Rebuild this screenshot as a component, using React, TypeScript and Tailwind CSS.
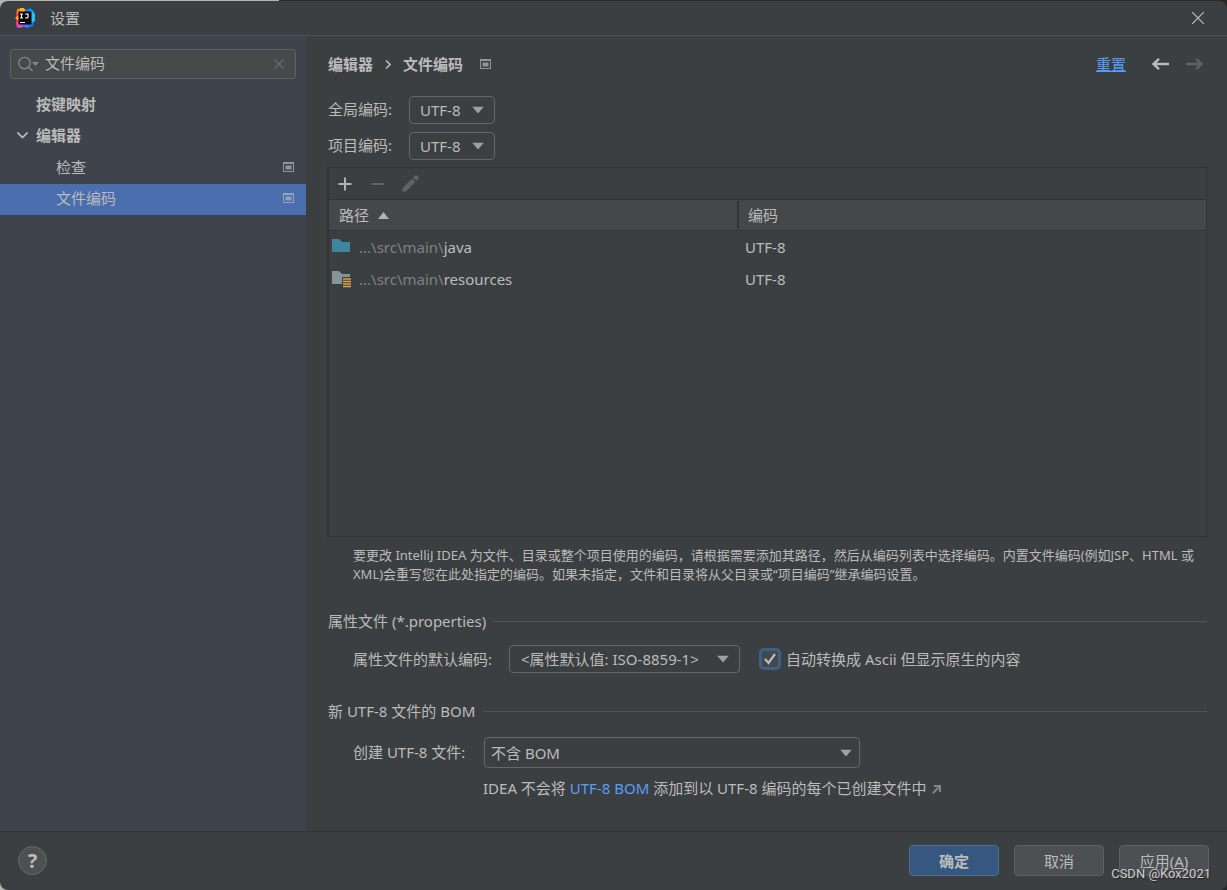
import { ReactNode, useState } from "react"
import clsx from "clsx"

const rows = [
    { prefix: "...\\src\\main\\", name: "java", encoding: "UTF-8", icon: "source" },
    { prefix: "...\\src\\main\\", name: "resources", encoding: "UTF-8", icon: "resource" },
]

const Logo = () => (
    <svg width="20" height="20" viewBox="0 0 20 20" aria-hidden="true">
        <path d="M2 1 7 0l4 2 1 8-9 2-2-4Z" fill="#fc801d" />
        <path d="M5 0h4l2 4-6 1Z" fill="#fdb60d" />
        <path d="M1 6l6-1 3 9-3 5-5 1-1-5Z" fill="#fe2857" />
        <path d="M0 10l4-3v6Z" fill="#fdb60d" />
        <path d="M1 15l6-3 2 7-6 1Z" fill="#e04ac8" />
        <path d="M10 2l5-2 4 3 1 6-2 9-6 2-5-2Z" fill="#087cfa" />
        <path d="M15 1l5 5v7l-4 2Z" fill="#21c3f7" />
        <path d="M8 17h6l-2 3Z" fill="#7b61ff" />
        <rect x="3.500" y="3.500" width="13" height="13" fill="#0b0608" />
        <path d="M5 6h3M6.500 6v4M5 10h3M10 6h3v3q0 1-1 1h-2M5 14.500h5" stroke="#fff" strokeWidth="1.200" fill="none" />
    </svg>
)

const ProjectIcon = ({ className }: { className?: string }) => (
    <svg width="11" height="10" viewBox="0 0 11 10" className={className} aria-hidden="true">
        <path d="M0 0h11v10H0ZM1 2v7h9V2Z" fill="currentColor" fillRule="evenodd" />
        <rect x="2.500" y="3.500" width="6" height="4" fill="currentColor" />
    </svg>
)

const FolderIcon = ({ type }: { type: string }) => (
    <svg width="20" height="18" viewBox="0 0 20 18" aria-hidden="true">
        <path d="M0 1h7l3 3h8v10H0Z" fill={type === "source" ? "#3e86a0" : "#87939a"} />
        {type === "resource" && (
            <>
                <rect x="10" y="7" width="10" height="11" fill="#3c3f41" />
                <path d="M11 9h8M11 11.500h8M11 14h8M11 16.500h8" stroke="#d9a343" strokeWidth="1.400" />
            </>
        )}
    </svg>
)

type SelectProps = {
    id: string
    options: string[]
    className: string
    arrow: string
}

const Select = ({ id, options, className, arrow }: SelectProps) => (
    <div className="relative">
        <select
            id={id}
            className={clsx("block appearance-none rounded border border-[#646669] bg-[#3c3f41] focus:outline-none", className)}>
            {options.map(option => (
                <option key={option}>{option}</option>
            ))}
        </select>
        <svg
            width="12"
            height="7"
            viewBox="0 0 12 7"
            className={clsx("pointer-events-none absolute top-1/2 -translate-y-1/2 text-[#9da0a2]", arrow)}>
            <path d="M0 0h12L6 7Z" fill="currentColor" />
        </svg>
    </div>
)

const SectionTitle = ({ children }: { children: ReactNode }) => (
    <div className="flex h-6 items-center gap-2 pl-px">
        <h2>{children}</h2>
        <span className="h-px flex-1 bg-[#515456]" />
    </div>
)

const Sidebar = () => {

    const [query, setQuery] = useState("文件编码")

    return (
        <aside className="w-[306px] shrink-0 bg-[#3f434c]">
            <div className="mx-[10px] mt-[13px] mb-[11px] flex h-[30px] items-center rounded-[3px] border border-[#5f6365] bg-[#45494a] px-[7px]">
                <svg width="21" height="16" viewBox="0 0 21 16" fill="none" className="text-[#82898d]" aria-hidden="true">
                    <circle cx="6.500" cy="7" r="5.700" stroke="currentColor" strokeWidth="1.300" />
                    <path d="m10.500 11 4 4" stroke="currentColor" strokeWidth="1.600" />
                    <path d="M14 6h7l-3.500 4Z" fill="currentColor" />
                </svg>
                <input
                    type="text"
                    aria-label="搜索"
                    value={query}
                    onChange={e => setQuery(e.target.value)}
                    className="mb-0.5 ml-1.5 min-w-0 flex-1 bg-transparent focus:outline-none" />
                <button type="button" aria-label="清除" onClick={() => setQuery("")} className="p-1 text-[#6b7073]">
                    <svg width="10" height="10" viewBox="0 0 10 10" stroke="currentColor" strokeWidth="1.100">
                        <path d="m0 0 10 10M10 0 0 10" />
                    </svg>
                </button>
            </div>

            <nav>
                <a href="#keymap" className="flex h-[31px] items-center pb-1 pl-9 font-bold">按键映射</a>
                <a href="#editor" className="flex h-8 items-center gap-2 pb-1 pl-[17px] font-bold">
                    <svg width="11" height="7" viewBox="0 0 11 7" fill="none" stroke="currentColor" strokeWidth="1.600">
                        <path d="m.5.5 5 5 5-5" />
                    </svg>
                    编辑器
                </a>
                <a href="#inspections" className="flex h-[31px] items-center justify-between pr-3 pb-1 pl-14">
                    检查
                    <ProjectIcon className="text-[#8c969d]" />
                </a>
                <a href="#encodings" className="flex h-[31px] items-center justify-between bg-[#4b6eaf] pr-3 pb-1 pl-14">
                    文件编码
                    <ProjectIcon className="text-[#93a3bd]" />
                </a>
            </nav>
        </aside>
    )
}

const EncodingTable = () => (
    <div className="mt-[7px] flex min-h-[340px] flex-1 flex-col border border-l-2 border-[#323232]">
        <div className="flex h-[31px] shrink-0 items-center pl-[9px]">
            <button type="button" aria-label="添加">
                <svg width="14" height="14" viewBox="0 0 14 14" stroke="#afb1b3" strokeWidth="2">
                    <path d="M7 .5v13M.5 7h13" />
                </svg>
            </button>
            <button type="button" aria-label="移除" className="ml-5">
                <svg width="12" height="14" viewBox="0 0 12 14" stroke="#5f6163" strokeWidth="2">
                    <path d="M0 7h12" />
                </svg>
            </button>
            <button type="button" aria-label="编辑" className="ml-[18px]">
                <svg width="17" height="17" viewBox="0 0 17 17" fill="#5f6163">
                    <path d="M10 3.500 13.500 7 4 16.500H.5V13ZM11 2.500 13 .5q1-.8 2 0l1.500 1.500q.8 1 0 2l-2 2Z" />
                </svg>
            </button>
        </div>
        <table className="w-full table-fixed border-collapse text-left">
            <thead>
                <tr className="h-[31px] border-y border-[#323537] bg-[#45484a]">
                    <th className="w-[408px] py-0 pr-0 pl-2.5 font-normal">
                        <span className="flex items-center gap-[9px]">
                            路径
                            <svg width="11" height="7" viewBox="0 0 11 7" fill="#afb1b3">
                                <path d="M0 7h11L5.500 0Z" />
                            </svg>
                        </span>
                    </th>
                    <th className="p-0 font-normal">
                        <span className="block h-7 border-l-2 border-[#323537] pl-[9px] leading-7">编码</span>
                    </th>
                </tr>
            </thead>
            <tbody>
                {rows.map(row => (
                    <tr key={row.name} className="h-8">
                        <td className="py-0 pr-0 pl-[3px]">
                            <span className="flex items-center gap-[7px]">
                                <FolderIcon type={row.icon} />
                                <span><span className="text-[#7f8183]">{row.prefix}</span>{row.name}</span>
                            </span>
                        </td>
                        <td className="py-0 pr-0 pl-2">{row.encoding}</td>
                    </tr>
                ))}
            </tbody>
        </table>
    </div>
)

const App = () => {

    const [autoConvert, setAutoConvert] = useState(true)

    return (
        <div className="flex min-h-screen flex-col bg-[linear-gradient(to_right,#b4b4b4_279px,#292929_279px)] pt-px font-['Noto_Sans','Noto_Sans_CJK_SC',sans-serif] text-[15px] leading-5 text-[#bbbbbb]">
            <div className="relative flex flex-1 flex-col overflow-hidden rounded-lg bg-[#3c3f41]">

                {/* Title bar */}
                <header className="flex h-[35px] items-center border-b border-[#515456] pr-[23px] pl-[15px]">
                    <Logo />
                    <h1 className="ml-[15px] flex-1">设置</h1>
                    <button type="button" aria-label="关闭">
                        <svg width="12" height="12" viewBox="0 0 12 12" stroke="#bbbbbb" strokeWidth="1.200">
                            <path d="m0 0 12 12M12 0 0 12" />
                        </svg>
                    </button>
                </header>

                <div className="flex flex-1">
                    <Sidebar />

                    <main className="flex min-w-0 flex-1 flex-col pr-5 pb-[33px] pl-[21px]">
                        <div className="mt-[18px] flex h-5 items-center pl-px font-bold">
                            <a href="#editor">编辑器</a>
                            <svg width="6" height="9" viewBox="0 0 6 9" fill="none" stroke="currentColor" strokeWidth="1.600" className="mx-3">
                                <path d="m1 .5 4 4-4 4" />
                            </svg>
                            <span>文件编码</span>
                            <ProjectIcon className="ml-[17px] text-[#8c969d]" />
                            <a href="#reset" className="ml-auto font-normal text-[#589df6] underline">重置</a>
                            <button type="button" aria-label="后退" className="ml-[26px]">
                                <svg width="17" height="12" viewBox="0 0 17 12" fill="none" stroke="#bbbbbb" strokeWidth="2.300">
                                    <path d="M17 6H1.500M7 .8 1.500 6 7 11.200" />
                                </svg>
                            </button>
                            <button type="button" aria-label="前进" className="mr-1 ml-[17px]">
                                <svg width="17" height="12" viewBox="0 0 17 12" fill="none" stroke="#5f6163" strokeWidth="2.300">
                                    <path d="M0 6h15.500M10 .8 15.500 6 10 11.200" />
                                </svg>
                            </button>
                        </div>

                        <div className="mt-[22px] flex flex-col gap-2 pl-px">
                            <div className="flex items-center">
                                <label htmlFor="global" className="w-[81px] pb-0.5">全局编码:</label>
                                <Select id="global" options={["UTF-8", "GBK"]} className="h-7 w-[86px] pl-2.5" arrow="right-[11px]" />
                            </div>
                            <div className="flex items-center">
                                <label htmlFor="project" className="w-[81px] pb-0.5">项目编码:</label>
                                <Select id="project" options={["UTF-8", "GBK"]} className="h-7 w-[86px] pl-2.5" arrow="right-[11px]" />
                            </div>
                        </div>

                        <EncodingTable />

                        <p className="mt-[9px] pl-[26px] text-[13px] leading-[19px]">
                            要更改 IntelliJ IDEA 为文件、目录或整个项目使用的编码，请根据需要添加其路径，然后从编码列表中选择编码。内置文件编码(例如JSP、HTML 或 XML)会重写您在此处指定的编码。如果未指定，文件和目录将从父目录或“项目编码”继承编码设置。
                        </p>

                        <div className="mt-[25px]">
                            <SectionTitle>属性文件 (*.properties)</SectionTitle>
                            <div className="mt-3 flex items-center pl-[26px]">
                                <label htmlFor="properties" className="mr-[17px]">属性文件的默认编码:</label>
                                <Select
                                    id="properties"
                                    options={["<属性默认值: ISO-8859-1>", "UTF-8"]}
                                    className="h-7 w-[231px] pl-[11px]"
                                    arrow="right-[11px]" />
                                <label className="ml-[19px] flex items-center gap-[5px]">
                                    <span className="relative flex">
                                        <input
                                            type="checkbox"
                                            checked={autoConvert}
                                            onChange={e => setAutoConvert(e.target.checked)}
                                            className="size-[22px] appearance-none rounded-[5px] border-3 border-[#3d6185] bg-[#43494a] focus:outline-none" />
                                        {autoConvert && (
                                            <svg width="12" height="12" viewBox="0 0 12 12" fill="none" stroke="#bbbbbb" strokeWidth="2.200" className="pointer-events-none absolute top-[5px] left-[5px]">
                                                <path d="m1 6 3.500 4L11 1" />
                                            </svg>
                                        )}
                                    </span>
                                    自动转换成 Ascii 但显示原生的内容
                                </label>
                            </div>
                        </div>

                        <div className="mt-[26px]">
                            <SectionTitle>新 UTF-8 文件的 BOM</SectionTitle>
                            <div className="mt-3.5 flex items-center pl-[26px]">
                                <label htmlFor="bom" className="w-[131px] pb-0.5">创建 UTF-8 文件:</label>
                                <Select id="bom" options={["不含 BOM", "含 BOM"]} className="h-[31px] w-[376px] pl-1.5" arrow="right-2" />
                            </div>
                            <p className="mt-2.5 pl-[156px]">
                                IDEA 不会将 <a href="#bom" className="text-[#589df6]">UTF-8 BOM</a> 添加到以 UTF-8 编码的每个已创建文件中
                                <svg width="9" height="9" viewBox="0 0 9 9" fill="none" stroke="#7f868b" strokeWidth="2" className="ml-1.5 inline">
                                    <path d="M2 1h6v6M8 1 .8 8.200" />
                                </svg>
                            </p>
                        </div>
                    </main>
                </div>

                <footer className="flex h-[59px] items-center gap-[15px] border-t border-[#323537] pr-[18px] pb-px pl-[18px]">
                    <button type="button" className="mr-auto size-[29px] rounded-full border border-[#656869] bg-[#4c5052] text-xl leading-6 font-bold">?</button>
                    <button type="submit" className="h-[31px] w-[90px] rounded border border-[#4c708c] bg-[#365880] font-bold">确定</button>
                    <button type="button" className="h-[31px] w-[90px] rounded border border-[#5e6060] bg-[#4c5052]">取消</button>
                    <button type="button" className="h-[31px] w-[90px] rounded border border-[#5e6060] bg-[#4c5052]">应用(<u>A</u>)</button>
                </footer>

                <span className="pointer-events-none absolute right-4 bottom-1.5 font-['Roboto',sans-serif] text-[13px] text-[#d0d0d0] [text-shadow:1px_1px_1px_#222]">CSDN @Kox2021</span>
            </div>
        </div>
    )
}

export default App
